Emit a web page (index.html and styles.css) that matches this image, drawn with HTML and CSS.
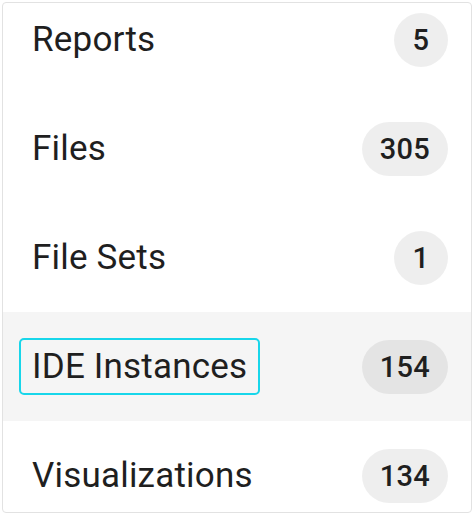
FILE: index.html
```html
<!DOCTYPE html>
<html lang="en">
<head>
<meta charset="utf-8">
<title>Navigation list</title>
<link rel="stylesheet" href="styles.css">
</head>
<body>
<div class="card">
  <ul class="list">
    <li class="row"><span class="label">Reports</span><span class="badge">5</span></li>
    <li class="row"><span class="label">Files</span><span class="badge">305</span></li>
    <li class="row"><span class="label">File Sets</span><span class="badge">1</span></li>
    <li class="row row-active"><span class="label label-focus">IDE Instances</span><span class="badge">154</span></li>
    <li class="row"><span class="label">Visualizations</span><span class="badge">134</span></li>
  </ul>
</div>
</body>
</html>
```

FILE: styles.css
```css
html, body {
  margin: 0;
  padding: 0;
  background: #ffffff;
}
body {
  padding: 2px;
  font-family: Roboto, "Noto Sans", "Liberation Sans", sans-serif;
  color: #1f1f1f;
}
.card {
  box-sizing: border-box;
  width: 470px;
  height: 511px;
  border: 1px solid #e2e2e2;
  border-radius: 4px;
  overflow: hidden;
  background: #ffffff;
}
.list {
  list-style: none;
  margin: -18px 0 0 0;
  padding: 0;
}
.row {
  height: 109px;
  display: flex;
  align-items: center;
  justify-content: space-between;
  padding: 0 23px 0 16px;
  box-sizing: border-box;
}
.row-active {
  background: #f5f5f5;
}
.label {
  font-size: 35px;
  line-height: 41px;
  letter-spacing: 0.2px;
  padding: 6px 11px;
  border-radius: 5px;
  border: 2px solid transparent;
}
.label-focus {
  border-color: #18d6ea;
}
.badge {
  box-sizing: border-box;
  min-width: 54px;
  height: 54px;
  line-height: 54px;
  padding: 0 18px;
  border-radius: 27px;
  background: rgba(0, 0, 0, 0.068);
  font-size: 29px;
  font-weight: 500;
  letter-spacing: 0.3px;
  text-align: center;
}
```
